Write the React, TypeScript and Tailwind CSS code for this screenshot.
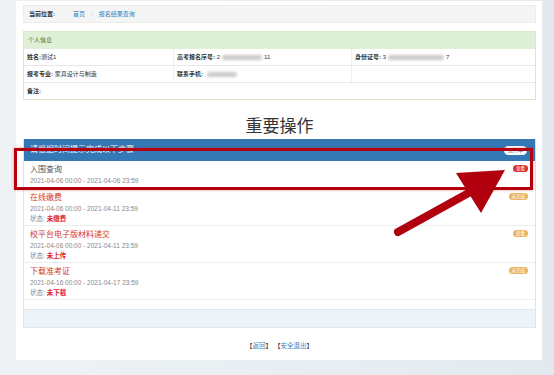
import React from 'react';

const steps = [
  { title: '入围查询', time: '2021-04-06 00:00 - 2021-04-06 23:59', done: true, badge: '查看', badgeCls: 'bg-[#d9302c]' },
  { title: '在线缴费', time: '2021-04-06 00:00 - 2021-04-11 23:59', status: '未缴费', badge: '未完成', badgeCls: 'bg-[#e9b464]' },
  { title: '校平台电子版材料递交', time: '2021-04-06 00:00 - 2021-04-11 23:59', status: '未上传', badge: '查看', badgeCls: 'bg-[#e9b464]' },
  { title: '下载准考证', time: '2021-04-16 00:00 - 2021-04-17 23:59', status: '未下载', badge: '未完成', badgeCls: 'bg-[#e9b464]' },
];

const Redacted: React.FC<{ w: number }> = ({ w }) => (
  <span className="inline-block h-[5px] bg-[#c9c9c9] blur-[1.5px] rounded-sm mx-[2px]" style={{ width: w }} />
);

export default function App() {
  return (
    <div className="relative w-[554px] h-[375px] overflow-hidden bg-gradient-to-r from-[#eef2f5] to-[#e3eaef] font-['Liberation_Sans','Noto_Sans_CJK_SC',sans-serif] text-[#333]">
      <div className="ml-[16px] mt-[1px] w-[526px] h-[359px] bg-white px-[7px] pt-[4px] pr-[6px]">
        {/* breadcrumb */}
        <div className="h-[18px] bg-[#f5f5f5] border border-[#ececec] flex items-center pl-[5px] text-[6px]">
          <span className="font-bold text-[#333] w-[44px]">当前位置:</span>
          <span className="text-[#3a7fc1]">首页</span>
          <span className="text-[#ccc] mx-[6px]">/</span>
          <span className="text-[#3a7fc1]">报名结果查询</span>
        </div>

        {/* personal info */}
        <div className="mt-[8px] border border-[#d6e9c6] text-[6px]">
          <div className="h-[17px] bg-[#dff0d8] text-[#3c763d] flex items-center pl-[4px]">个人信息</div>
          <div className="grid grid-cols-[150px_178px_1fr] h-[17px] border-b border-[#e8e8e8]">
            <div className="flex items-center pl-[3px] border-r border-[#eee]"><b>姓名:</b>测试1</div>
            <div className="flex items-center pl-[3px] border-r border-[#eee]"><b>高考报名序号:</b>&nbsp;2<Redacted w={40} />11</div>
            <div className="flex items-center pl-[3px]"><b>身份证号:</b>&nbsp;3<Redacted w={56} />7</div>
          </div>
          <div className="grid grid-cols-[150px_178px_1fr] h-[17px] border-b border-[#e8e8e8]">
            <div className="flex items-center pl-[3px] border-r border-[#eee]"><b>报考专业:</b>&nbsp;家具设计与制造</div>
            <div className="flex items-center pl-[3px] border-r border-[#eee]"><b>联系手机:</b>&nbsp;<Redacted w={30} /></div>
            <div />
          </div>
          <div className="h-[16px] flex items-center pl-[3px]"><b>备注:</b></div>
        </div>

        {/* important */}
        <div className="mt-[14px] mb-[3px] h-[22px] leading-[22px] text-center text-[17px] text-[#333] font-['Noto_Sans_CJK_SC',sans-serif]">重要操作</div>

        <div className="border-x border-[#dde3e8]">
          <div className="h-[22px] bg-[#3478b6] flex items-center justify-between pl-[6px] pr-[8px]">
            <span className="text-white text-[8px]">请根据时间提示完成以下步骤</span>
            <span className="bg-white text-[#3478b6] text-[5px] rounded-full px-[4px] h-[9px] leading-[9px]">进行中</span>
          </div>
          {steps.map((s, i) => (
            <div
              key={i}
              className={`flex justify-between pl-[6px] pr-[7px] pt-[2px] border-b border-[#eceff1] ${s.done ? 'h-[28px]' : 'h-[37px]'}`}
            >
              <div>
                <div className={`h-[13px] leading-[13px] text-[8px] ${s.done ? 'text-[#555]' : 'text-[#d33a35]'}`}>{s.title}</div>
                <div className="h-[10px] leading-[10px] text-[6.5px] text-[#888]">{s.time}</div>
                {!s.done && (
                  <div className="h-[10px] leading-[10px] text-[6.5px] text-[#888]">
                    状态:&nbsp;<span className="text-[#e0231b] font-bold">{s.status}</span>
                  </div>
                )}
              </div>
              <span className={`mt-[2px] h-[7px] leading-[7px] px-[3px] rounded-full text-white text-[4.5px] ${s.badgeCls}`}>{s.badge}</span>
            </div>
          ))}
          <div className="h-[9px]" />
          <div className="h-[19px] bg-[#edf4fa] border-y border-[#dfe8ef]" />
        </div>

        <div className="mt-[13px] text-center text-[6.5px] text-[#333]">
          【<span className="text-[#3a7fc1]">返回</span>】 【<span className="text-[#3a7fc1]">安全退出</span>】
        </div>
      </div>

      {/* annotation overlay */}
      <div className="absolute left-[14px] top-[148px] w-[519px] h-[42px] border-[3px] border-[#b3000c] shadow-[0_0_3px_rgba(180,0,12,0.35)] pointer-events-none" />
      <svg className="absolute inset-0 pointer-events-none" width="554" height="375" viewBox="0 0 554 375">
        <line x1="398" y1="232" x2="474" y2="190" stroke="#b0000e" strokeWidth="8" strokeLinecap="round" />
        <polygon points="505,170 456,173 481,213" fill="#b0000e" />
      </svg>
    </div>
  );
}
